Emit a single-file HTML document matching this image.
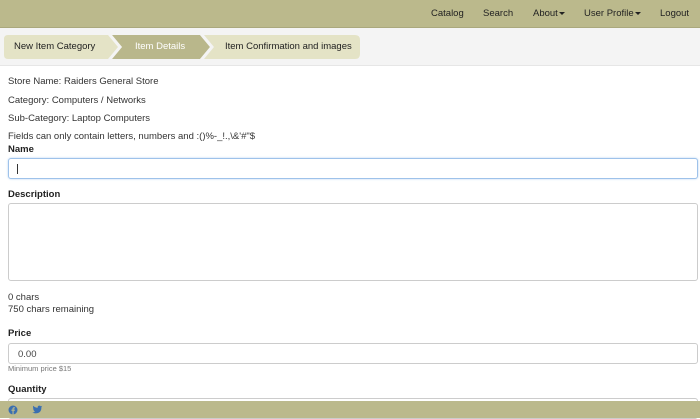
<!DOCTYPE html>
<html><head><style>
*{box-sizing:border-box;margin:0;padding:0}
body{width:700px;height:418px;overflow:hidden;background:#fff;font-family:"Liberation Sans",sans-serif;color:#333;position:relative}
.nav{position:absolute;top:0;left:0;width:700px;height:28px;background:#bbb98c;border-bottom:1px solid #aaa87d}
.nav span{position:absolute;top:8px;font-size:9.5px;color:#222}
.car{display:inline-block;border-left:3px solid transparent;border-right:3px solid transparent;border-top:3px solid #222;vertical-align:middle;margin-left:1px}
.bc{position:absolute;top:28px;left:0;width:700px;height:38px;background:#f4f4f4;border-bottom:1px solid #e6e6e6}
.crumb{position:absolute;top:7px;height:24px;font-size:9.5px;line-height:24px}
.t{position:absolute;font-size:9.5px;color:#333}
.lbl{position:absolute;font-size:9.5px;font-weight:bold;color:#222}
.inp{position:absolute;left:8px;width:690px;border:1px solid #ccc;border-radius:3px;background:#fff}
.foot{position:absolute;left:0;top:401px;width:700px;height:17px;background:#bbb98c}
</style></head><body>
<div class="nav">
<span style="left:431px">Catalog</span>
<span style="left:483px">Search</span>
<span style="left:533px">About<i class="car"></i></span>
<span style="left:584px">User Profile<i class="car"></i></span>
<span style="left:660px">Logout</span>
</div>
<div class="bc">
<svg width="360" height="38" style="position:absolute;left:0;top:0">
<path d="M8 7 H355 Q360 7 360 12 V26 Q360 31 355 31 H8 Q4 31 4 27 V11 Q4 7 8 7Z" fill="#e4e3c6"/>
<path d="M112 7 H200 L210 19 L200 31 H112 L122 19Z" fill="#b9b78b"/>
<path d="M200 7 L210 19 L200 31 H204 L214 19 L204 7Z" fill="#f4f4f4"/>
<path d="M108 7 L118 19 L108 31 H112 L122 19 L112 7Z" fill="#f4f4f4"/>
</svg>
<div class="crumb" style="left:14px;color:#222">New Item Category</div>
<div class="crumb" style="left:135px;color:#fff">Item Details</div>
<div class="crumb" style="left:225px;color:#222">Item Confirmation and images</div>
</div>
<div class="t" style="left:8px;top:76px">Store Name: Raiders General Store</div>
<div class="t" style="left:8px;top:95px">Category: Computers / Networks</div>
<div class="t" style="left:8px;top:113px">Sub-Category: Laptop Computers</div>
<div class="t" style="left:8px;top:131px">Fields can only contain letters, numbers and :()%-_!.,\&'#"$</div>
<div class="lbl" style="left:8px;top:144px">Name</div>
<div class="inp" style="top:158px;height:21px;border-color:#9ec2ea;box-shadow:0 0 2px #b8d4f2"><div style="position:absolute;left:8px;top:5px;width:1px;height:10px;background:#333"></div></div>
<div class="lbl" style="left:8px;top:189px">Description</div>
<div class="inp" style="top:203px;height:78px"></div>
<div class="t" style="left:8px;top:292px">0 chars</div>
<div class="t" style="left:8px;top:304px">750 chars remaining</div>
<div class="lbl" style="left:8px;top:328px">Price</div>
<div class="inp" style="top:343px;height:21px"><span style="position:absolute;left:9px;top:5px;font-size:9.5px;color:#444">0.00</span></div>
<div class="t" style="left:8px;top:364px;font-size:7.5px;color:#777">Minimum price $15</div>
<div class="lbl" style="left:8px;top:384px">Quantity</div>
<div class="inp" style="top:398px;height:21px"></div>
<div class="foot">
<svg width="10" height="10" style="position:absolute;left:8px;top:4px"><circle cx="5" cy="5" r="4.5" fill="#3b6fb0"/><path d="M5.6 9.5V5.8H6.8L7 4.6H5.6V3.9Q5.6 3.4 6.1 3.4H7V2.4Q6.5 2.3 6 2.3 4.5 2.3 4.5 3.8V4.6H3.4V5.8H4.5V9.5Z" fill="#bbb98c"/></svg>
<svg width="11" height="10" style="position:absolute;left:32px;top:4px"><path d="M10.5 1.5Q10 1.8 9.3 1.9 10 1.4 10.2 0.7 9.6 1.1 8.8 1.2 8.2 0.6 7.4 0.6 5.6 0.6 5.6 2.5Q5.6 2.8 5.7 2.9 3 2.8 1.2 0.8 .5 2.4 1.8 3.5 1.3 3.5.9 3.3 .9 4.7 2.3 5.3 1.8 5.4 1.4 5.3 1.8 6.5 3.1 6.6 1.9 7.6.3 7.5 1.8 8.4 3.5 8.4 9.4 8.4 9.4 2.4V2.1Q10.1 1.8 10.5 1.5Z" fill="#3b6fb0"/></svg>
</div>
</body></html>
